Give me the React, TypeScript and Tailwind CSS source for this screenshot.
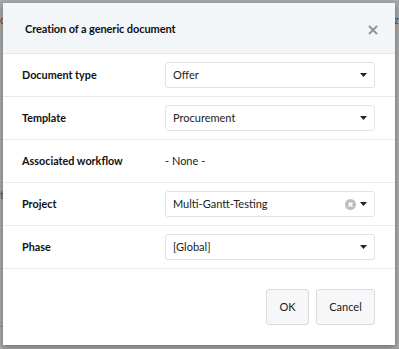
import React from "react";

const Caret = () => (
  <svg width="7" height="4" viewBox="0 0 7 4" className="shrink-0">
    <path d="M0 0h7L3.5 4z" fill="#222" />
  </svg>
);

const Select = ({ value, clear }: { value: string; clear?: boolean }) => (
  <div className="flex h-[26px] w-[210px] items-center rounded-[3px] border border-[#e2e2e2] bg-white pl-[7px] pr-[7px]">
    <span className="flex-1 truncate text-[11px] text-[#222]">{value}</span>
    {clear && (
      <svg width="11" height="11" viewBox="0 0 11 11" className="mr-[4px]">
        <circle cx="5.5" cy="5.5" r="5.5" fill="#bdbdbd" />
        <path d="M3.5 3.5l4 4M7.5 3.5l-4 4" stroke="#fff" strokeWidth="1.6" />
      </svg>
    )}
    <Caret />
  </div>
);

const rows: { label: string; value?: string; clear?: boolean }[] = [
  { label: "Document type", value: "Offer" },
  { label: "Template", value: "Procurement" },
  { label: "Associated workflow" },
  { label: "Project", value: "Multi-Gantt-Testing", clear: true },
  { label: "Phase", value: "[Global]" },
];

export default function App() {
  return (
    <div
      className="relative h-[349px] w-[399px] overflow-hidden bg-[#a8a8a8]"
      style={{ fontFamily: "Lato, 'Noto Sans', sans-serif" }}
    >
      {/* page behind the overlay */}
      <div className="absolute left-0 top-[12px] text-[11px] text-[#8a3a3a]">c</div>
      <div className="absolute right-0 top-[12px] text-[11px] text-[#2a5a8a]">z</div>
      <div className="absolute left-0 top-[187px] text-[11px] text-[#555]">ti</div>
      <div className="absolute left-0 top-[326px] h-px w-[4px] bg-[#8e8e8e]" />

      {/* dialog */}
      <div className="absolute left-[3px] top-[3px] flex h-[342px] w-[392px] flex-col bg-white shadow-[0_2px_6px_rgba(0,0,0,0.35)]">
        <div className="flex h-[51px] items-center justify-between border-b border-[#e6e6e6] bg-[#f3f6f9] pl-[22px] pr-[17px] pt-[3px]">
          <span className="text-[11px] font-bold tracking-[-0.1px] text-[#111]">
            Creation of a generic document
          </span>
          <svg width="10" height="10" viewBox="0 0 10 10">
            <path d="M1 1l8 8M9 1l-8 8" stroke="#8a959e" strokeWidth="2" />
          </svg>
        </div>
        {rows.map((r) => (
          <div
            key={r.label}
            className="flex h-[43px] items-center border-b border-[#e9e9e9] pl-[19px]"
          >
            <span className="w-[143px] text-[10.8px] font-bold text-[#111]">{r.label}</span>
            {r.value ? (
              <Select value={r.value} clear={r.clear} />
            ) : (
              <span className="text-[11px] text-[#222]">- None -</span>
            )}
          </div>
        ))}
        <div className="flex flex-1 items-start justify-end gap-[7px] pr-[20px] pt-[20px]">
          <button className="h-[36px] w-[43px] rounded-[3px] border border-[#d9d9d9] bg-[#f5f7f9] text-[11px] text-[#222]">
            OK
          </button>
          <button className="h-[36px] w-[59px] rounded-[3px] border border-[#d9d9d9] bg-[#f5f7f9] text-[11px] text-[#222]">
            Cancel
          </button>
        </div>
      </div>
    </div>
  );
}
